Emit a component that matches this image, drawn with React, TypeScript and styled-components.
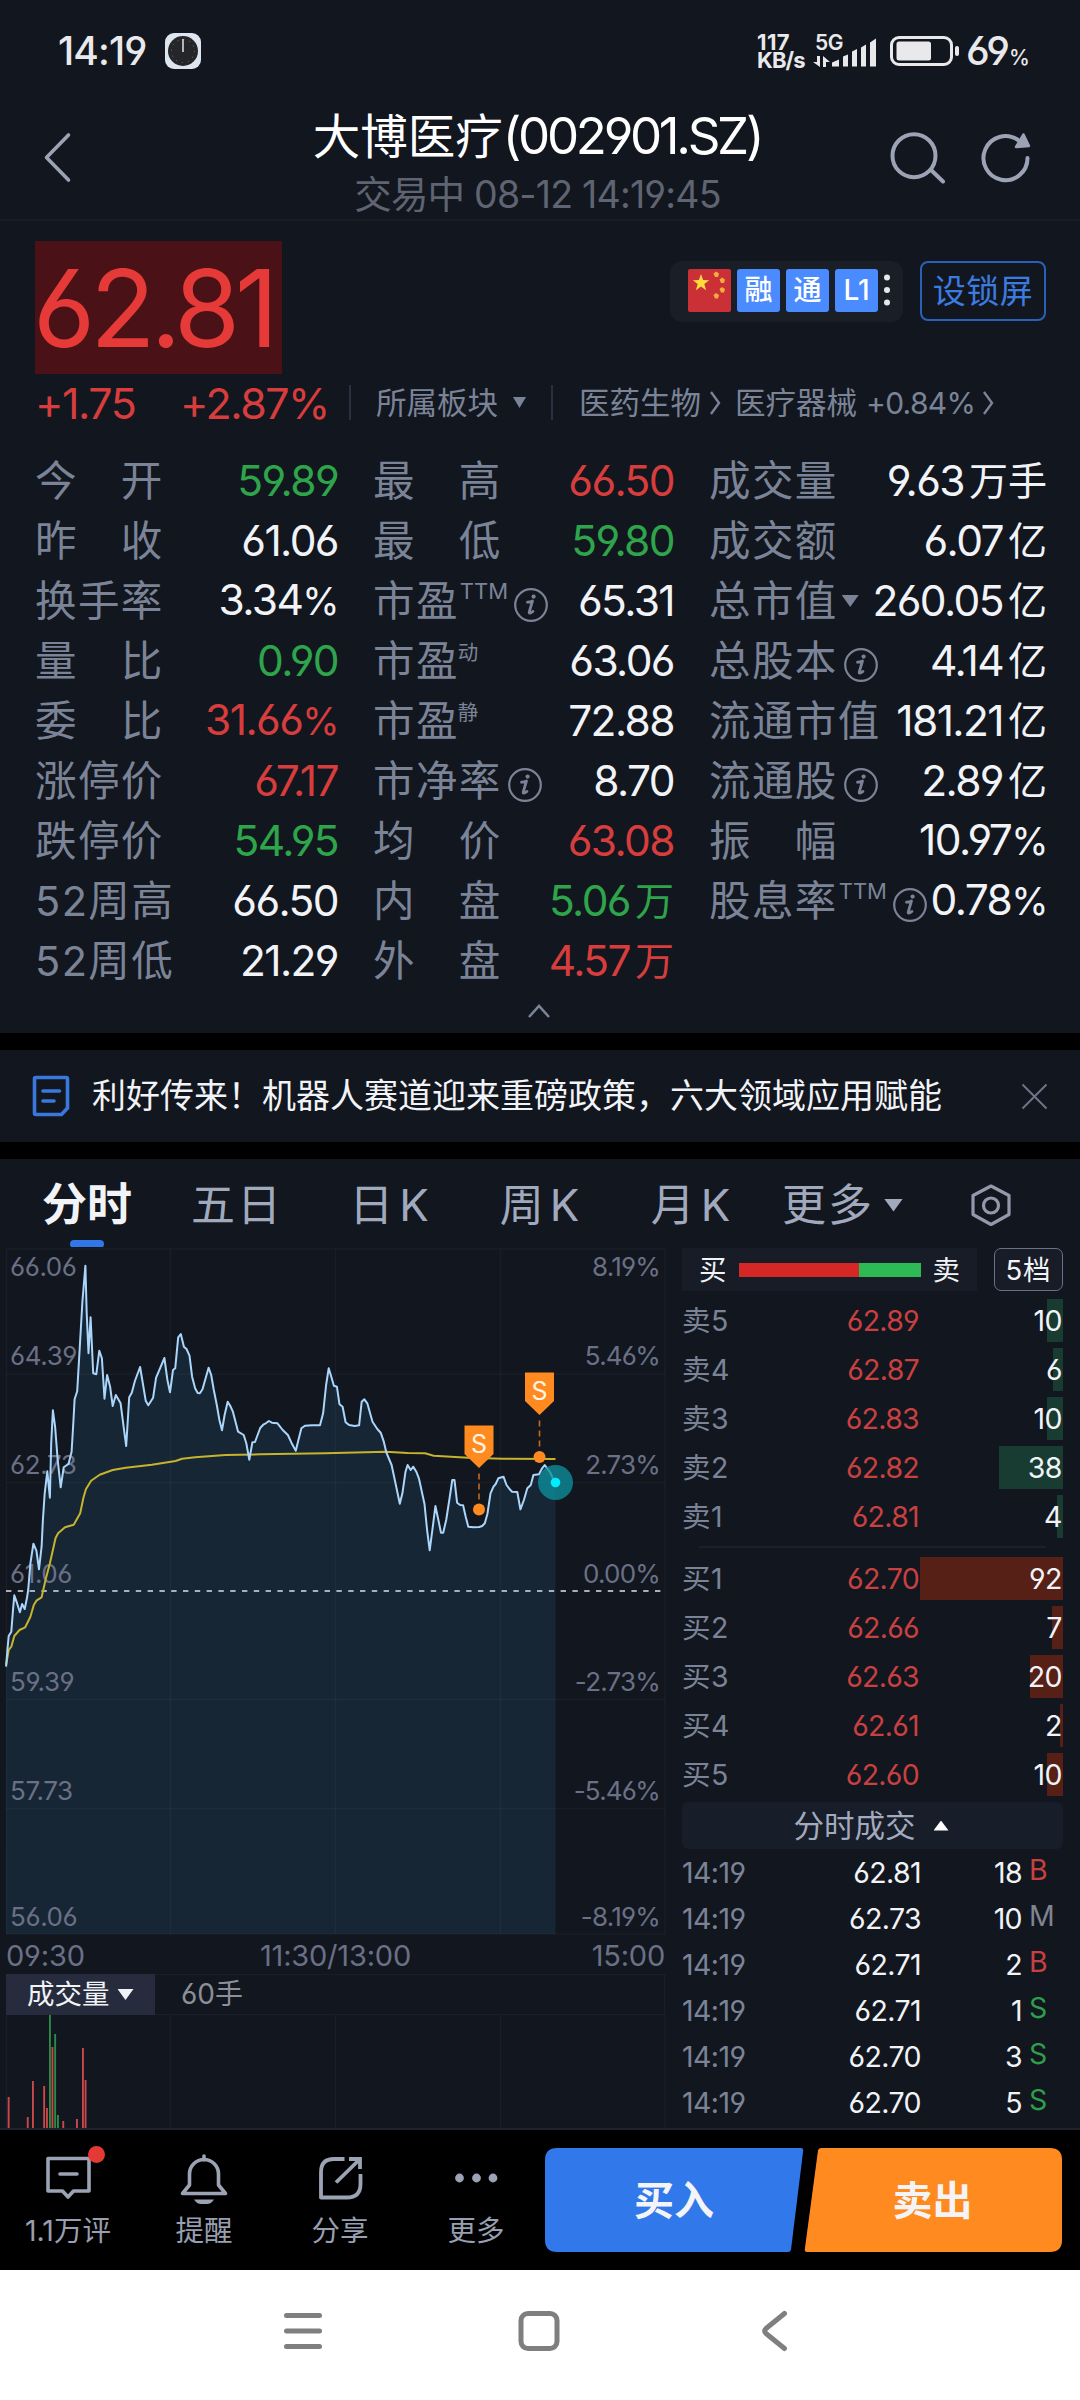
import React from "react";
import styled, { createGlobalStyle } from "styled-components";

const C = {
  bg: "#12161f",
  label: "#7b8497",
  text: "#f1f3f7",
  red: "#d63d3c",
  green: "#2ea44b",
  icon: "#9ba3b4",
  blue: "#3177e8",
  axis: "#6a7085",
  grid: "#191e28",
};

type Tone = "up" | "down" | "flat";
const toneColor = { up: C.red, down: C.green, flat: C.text };

const GlobalStyle = createGlobalStyle`
  * { box-sizing: border-box; }
  body {
    margin: 0;
    background: #000;
    font-family: Inter, "Noto Sans CJK SC", sans-serif;
    font-feature-settings: "cv03", "cv04";
  }
  svg { display: block; flex: none; }
`;

const Screen = styled.div`
  width: 1080px;
  height: 2400px;
  overflow: hidden;
  display: flex;
  flex-direction: column;
  background: #000;
  color: ${C.text};
`;

/* ---------- status bar ---------- */
const StatusBar = styled.div`
  height: 100px;
  flex: none;
  display: flex;
  align-items: center;
  padding: 1px 50px 0 58px;
  background: ${C.bg};
  color: #e9e9eb;
`;
const Clock = styled.span`
  width: 107px;
  font-size: 39px;
  line-height: 40px;
  font-weight: 500;
  letter-spacing: -0.9px;
`;
const StatusRight = styled.div`
  margin-left: auto;
  display: flex;
  align-items: center;
`;
const Speed = styled.div`
  width: 56px;
  display: flex;
  flex-direction: column;
  font-size: 22px;
  line-height: 18px;
  font-weight: 700;
  letter-spacing: -0.9px;
  white-space: nowrap;
  span:first-child { letter-spacing: 0.4px; }
`;
const Percent = styled.div`
  width: 64px;
  margin-left: 7px;
  height: 40px;
  display: flex;
  align-items: baseline;
  font-size: 40px;
  line-height: 40px;
  font-weight: 500;
  letter-spacing: -2px;
  small { font-size: 21px; line-height: 24px; letter-spacing: 0; font-weight: 500; margin-left: 1px; }
`;

/* ---------- header ---------- */
const Header = styled.header`
  height: 121px;
  flex: none;
  display: grid;
  grid-template-columns: 260px 1fr 260px;
  padding: 8px 48px 0 40px;
  background: ${C.bg};
  border-bottom: 2px solid #171c25;
`;
const HeaderSide = styled.div<{ $end?: boolean }>`
  display: flex;
  gap: 34px;
  padding-top: 20px;
  justify-content: ${(p) => (p.$end ? "flex-end" : "flex-start")};
`;
const Titles = styled.div`
  display: flex;
  flex-direction: column;
  align-items: center;
  white-space: nowrap;
`;
const Title = styled.h1`
  margin: 0;
  padding-left: 2px;
  font-size: 47.5px;
  line-height: 55px;
  font-weight: 400;
  color: #fff;
  span { font-size: 51px; letter-spacing: -3.3px; }
`;
const Subtitle = styled.div`
  font-size: 37.5px;
  line-height: 44px;
  margin-top: 9px;
  padding-left: 3px;
  color: #5f6472;
  letter-spacing: -0.8px;
`;

/* ---------- quote panel ---------- */
const Quote = styled.section`
  height: 812px;
  flex: none;
  display: flex;
  flex-direction: column;
  padding: 20px 34px 0 35px;
  background: ${C.bg};
`;
const PriceRow = styled.div`
  display: flex;
  height: 133px;
`;
const Price = styled.div`
  width: 247px;
  height: 133px;
  text-indent: -2px;
  font-size: 107px;
  line-height: 135px;
  letter-spacing: -5px;
  white-space: nowrap;
  color: #e53a38;
  background: #4a1217;
`;
const PriceActions = styled.div`
  margin: 20px 0 0 auto;
  display: flex;
  align-items: flex-start;
  gap: 17px;
`;
const Badges = styled.div`
  width: 233px;
  height: 61px;
  padding: 0 13px 3px 18px;
  display: flex;
  align-items: center;
  gap: 6px;
  border-radius: 12px;
  background: #1a1e27;
`;
const Badge = styled.span`
  width: 43px;
  height: 43px;
  border-radius: 3px;
  background: #4a8bff;
  color: #fff;
  font-size: 28px;
  line-height: 42px;
  font-weight: 500;
  text-align: center;
`;
const LockButton = styled.button`
  width: 126px;
  height: 60px;
  padding: 0;
  border: 2px solid #2a61b8;
  border-radius: 8px;
  background: none;
  font: inherit;
  font-size: 33px;
  line-height: 54px;
  letter-spacing: 0.5px;
  color: #3c7ce0;
`;
const SubRow = styled.div`
  height: 57px;
  display: flex;
  align-items: center;
  font-size: 30.5px;
  line-height: 40px;
  white-space: nowrap;
  color: ${C.label};
`;
const SectorChange = styled.span`
  margin-left: 9px;
  font-size: 30px;
  letter-spacing: -0.7px;
`;
const Change = styled.span<{ $w: number }>`
  width: ${(p) => p.$w}px;
  font-size: 43px;
  letter-spacing: -1.5px;
  color: ${C.red};
`;
const Bar = styled.i<{ $l: number; $r: number }>`
  width: 2px;
  height: 35px;
  margin: 0 ${(p) => p.$r}px 0 ${(p) => p.$l}px;
  background: #2a3040;
`;
const Caret = styled.i<{ $w: number; $h: number; $c?: string; $up?: boolean }>`
  width: ${(p) => p.$w}px;
  height: ${(p) => p.$h}px;
  flex: none;
  background: ${(p) => p.$c || "currentColor"};
  clip-path: ${(p) => (p.$up ? "polygon(50% 0, 100% 100%, 0 100%)" : "polygon(0 0, 100% 0, 50% 100%)")};
`;
const Stats = styled.div`
  margin-top: 20px;
  display: grid;
  grid-template-columns: 302px 300px 337px;
  column-gap: 36px;
`;
const StatCol = styled.div`
  display: flex;
  flex-direction: column;
`;
const Stat = styled.div`
  height: 60px;
  display: flex;
  justify-content: space-between;
  align-items: center;
  white-space: nowrap;
  line-height: 60px;
`;
const StatLabel = styled.div`
  display: flex;
  align-items: center;
  font-size: 41.5px;
  letter-spacing: 1.4px;
  color: ${C.label};
`;
const Sup = styled.sup<{ $cjk?: boolean }>`
  align-self: flex-start;
  margin-top: 7px;
  margin-left: ${(p) => (p.$cjk ? -1 : 1)}px;
  font-size: ${(p) => (p.$cjk ? 20.5 : 22)}px;
  line-height: ${(p) => (p.$cjk ? 30 : 26)}px;
  letter-spacing: 0;
`;
const StatValue = styled.div<{ $tone: Tone }>`
  display: flex;
  font-size: 42.5px;
  letter-spacing: -1.6px;
  margin-right: -1px;
  color: ${(p) => toneColor[p.$tone]};
  span { font-size: 39px; letter-spacing: 0; margin-left: 5px; }
  em { font-style: normal; font-size: 38px; line-height: 63px; }
`;
const Collapse = styled.div`
  display: flex;
  justify-content: center;
  padding: 12px 4px 0 0;
`;

/* ---------- news strip ---------- */
const News = styled.section`
  height: 92px;
  margin: 17px 0;
  flex: none;
  display: flex;
  align-items: center;
  padding: 0 32px;
  background: ${C.bg};
  font-size: 34px;
  line-height: 40px;
  white-space: nowrap;
  p { margin: 0 auto 0 22px; }
`;

/* ---------- chart tabs ---------- */
const Tabs = styled.nav`
  height: 88px;
  flex: none;
  display: grid;
  grid-template-columns: 174px 141px 150px 151px 151px 151px 1fr;
  padding-top: 16px;
  background: ${C.bg};
`;
const Tab = styled.div<{ $active?: boolean; $pad?: number }>`
  display: flex;
  flex-direction: column;
  align-items: center;
  padding-right: ${(p) => p.$pad || 0}px;
  white-space: nowrap;
  font-size: ${(p) => (p.$active ? 45 : 44)}px;
  line-height: 60px;
  letter-spacing: ${(p) => (p.$active ? 0 : 2)}px;
  font-weight: ${(p) => (p.$active ? 700 : 400)};
  color: ${(p) => (p.$active ? C.text : "#a1a9bd")};
`;
const TabLine = styled.span`
  display: flex;
  align-items: center;
  gap: 10px;
`;
const KLine = styled.span`
  display: flex;
  gap: 4px;
`;
const Pill = styled.i`
  width: 34px;
  height: 8px;
  margin-top: 5px;
  border-radius: 4px;
  background: ${C.blue};
`;

/* ---------- body ---------- */
const Body = styled.main`
  height: 883px;
  flex: none;
  display: grid;
  grid-template-columns: 682px 381px;
  background: ${C.bg};
  border-bottom: 2px solid #1f242c;
  overflow: hidden;
`;
const ChartSide = styled.div`
  display: flex;
  flex-direction: column;
`;
const TimeAxis = styled.div`
  width: 659px;
  height: 39px;
  margin-left: 6px;
  padding-top: 1px;
  display: grid;
  grid-template-columns: 1fr auto 1fr;
  font-size: 29px;
  line-height: 39px;
  letter-spacing: -0.2px;
  color: ${C.axis};
  :last-child { text-align: right; }
`;
const VolumeHead = styled.div`
  width: 659px;
  height: 41px;
  margin-left: 6px;
  display: flex;
  border: 1px solid ${C.grid};
  font-size: 28px;
  line-height: 39px;
  color: #8a8f98;
`;
const VolumePick = styled.div`
  width: 149px;
  height: 41px;
  margin: -1px 26px 0 -1px;
  display: flex;
  align-items: center;
  gap: 8px;
  padding-left: 21px;
  font-size: 27.5px;
  background: #262c3e;
  color: ${C.text};
`;

/* ---------- order book ---------- */
const BookSide = styled.div`
  display: flex;
  flex-direction: column;
  padding-top: 1px;
`;
const BookTop = styled.div`
  height: 43px;
  flex: none;
  margin-bottom: 8px;
  display: flex;
  justify-content: space-between;
`;
const Ratio = styled.div`
  width: 295px;
  height: 43px;
  padding: 0 17px;
  display: flex;
  align-items: center;
  justify-content: space-between;
  font-size: 27.5px;
  line-height: 40px;
  background: #171c27;
`;
const RatioBar = styled.div`
  width: 182px;
  height: 14px;
  background: linear-gradient(to right, #d62727 66%, #2dba55 66%);
`;
const Depth = styled.div`
  width: 69px;
  height: 43px;
  border: 1.5px solid #69718a;
  border-radius: 7px;
  background: #171c27;
  font-size: 27.5px;
  line-height: 43px;
  letter-spacing: 1px;
  text-align: center;
  white-space: nowrap;
`;
const Level = styled.div`
  height: 43px;
  flex: none;
  margin-bottom: 6px;
  display: grid;
  grid-template-columns: 100px 137px 144px;
  font-size: 28.5px;
  line-height: 43px;
`;
const LevelName = styled.span`
  letter-spacing: 0.6px;
  color: ${C.label};
`;
const LevelPrice = styled.span`
  text-align: right;
  letter-spacing: -0.7px;
  color: #c8403f;
`;
const LevelQty = styled.span<{ $fill: number; $buy?: boolean }>`
  padding-right: 1px;
  text-align: right;
  letter-spacing: -0.5px;
  color: ${C.text};
  background: linear-gradient(${(p) => (p.$buy ? "#572017, #572017" : "#183c31, #183c31")}) right / ${(p) => p.$fill}px 100% no-repeat;
`;
const BookSplit = styled.hr`
  width: 347px;
  height: 2px;
  flex: none;
  margin: 2px auto 9px 17px;
  border: 0;
  background: #1b212b;
`;
const TradesHead = styled.div`
  height: 47px;
  flex: none;
  margin: 0 0 11px;
  display: flex;
  align-items: center;
  justify-content: center;
  gap: 18px;
  border-radius: 6px;
  background: #171d29;
  font-size: 30.5px;
  line-height: 47px;
  padding-right: 3px;
  color: #a3aabe;
`;
const Trade = styled.div`
  height: 46px;
  flex: none;
  display: grid;
  grid-template-columns: 100px 139px 101px 41px;
  font-size: 28.5px;
  line-height: 26px;
  letter-spacing: -0.6px;
  text-align: right;
`;
const TradeTime = styled.span`
  text-align: left;
  color: ${C.label};
`;
const TradeSide = styled.span<{ $c: string }>`
  padding-left: 7px;
  margin-top: -3px;
  text-align: left;
  color: ${(p) => p.$c};
`;

/* ---------- bottom ---------- */
const BottomBar = styled.footer`
  height: 140px;
  flex: none;
  display: flex;
  background: #000;
`;
const Action = styled.div`
  width: 136px;
  padding-top: 22px;
  display: flex;
  flex-direction: column;
  align-items: center;
  gap: 9px;
  font-size: 28.5px;
  line-height: 36px;
  letter-spacing: 0;
  color: #989fb0;
`;
const TradeButtons = styled.div`
  position: relative;
  width: 517px;
  height: 104px;
  margin: 18px 0 0 1px;
  display: flex;
`;
const ButtonShapes = styled.svg`
  position: absolute;
  inset: 0;
`;
const TradeText = styled.b<{ $w: number; $shift: number }>`
  position: relative;
  width: ${(p) => p.$w}px;
  padding-left: ${(p) => p.$shift}px;
  font-size: 40px;
  line-height: 105px;
  text-align: center;
  color: #f4f4f6;
`;
const SystemNav = styled.div`
  height: 130px;
  flex: none;
  background: #fff;
`;

/* ---------- data ---------- */
type StatRow = { k: string; v: string; unit?: string; tone?: Tone; sup?: string; info?: boolean; caret?: boolean };
const columns: StatRow[][] = [
  [
    { k: "今　开", v: "59.89", tone: "down" },
    { k: "昨　收", v: "61.06" },
    { k: "换手率", v: "3.34%" },
    { k: "量　比", v: "0.90", tone: "down" },
    { k: "委　比", v: "31.66%", tone: "up" },
    { k: "涨停价", v: "67.17", tone: "up" },
    { k: "跌停价", v: "54.95", tone: "down" },
    { k: "52周高", v: "66.50" },
    { k: "52周低", v: "21.29" },
  ],
  [
    { k: "最　高", v: "66.50", tone: "up" },
    { k: "最　低", v: "59.80", tone: "down" },
    { k: "市盈", v: "65.31", sup: "TTM", info: true },
    { k: "市盈", v: "63.06", sup: "动" },
    { k: "市盈", v: "72.88", sup: "静" },
    { k: "市净率", v: "8.70", info: true },
    { k: "均　价", v: "63.08", tone: "up" },
    { k: "内　盘", v: "5.06", unit: "万", tone: "down" },
    { k: "外　盘", v: "4.57", unit: "万", tone: "up" },
  ],
  [
    { k: "成交量", v: "9.63", unit: "万手" },
    { k: "成交额", v: "6.07", unit: "亿" },
    { k: "总市值", v: "260.05", unit: "亿", caret: true },
    { k: "总股本", v: "4.14", unit: "亿", info: true },
    { k: "流通市值", v: "181.21", unit: "亿" },
    { k: "流通股", v: "2.89", unit: "亿", info: true },
    { k: "振　幅", v: "10.97%" },
    { k: "股息率", v: "0.78%", sup: "TTM", info: true },
  ],
];

const asks: [string, string, number, number][] = [
  ["卖5", "62.89", 10, 16],
  ["卖4", "62.87", 6, 10],
  ["卖3", "62.83", 10, 16],
  ["卖2", "62.82", 38, 64],
  ["卖1", "62.81", 4, 6],
];
const bids: [string, string, number, number][] = [
  ["买1", "62.70", 92, 143],
  ["买2", "62.66", 7, 11],
  ["买3", "62.63", 20, 33],
  ["买4", "62.61", 2, 3],
  ["买5", "62.60", 10, 16],
];
const trades: [string, number, string][] = [
  ["62.81", 18, "B"],
  ["62.73", 10, "M"],
  ["62.71", 2, "B"],
  ["62.71", 1, "S"],
  ["62.70", 3, "S"],
  ["62.70", 5, "S"],
];
const sideColor: Record<string, string> = { B: "#c8403f", M: "#7f848e", S: "#2f9e4c" };

/* Series are sampled on a 2.306 x 3 grid per pixel; the chart starts 51 units down. */
const priceSeries =
  "14,1310 17,1260 20,1218 26,1205 30,1140 33,1096 39,1118 46,1147 51,1122 57,1137 62,1105 65,1080 70,1000 77,941 84,962 90,1018 96,950 99,870 103,790 109,724 115,803 118,640 122,541 127,590 133,690 140,772 147,712 158,702 165,665 169,580 172,508 178,484 184,350 190,215 197,107 200,250 204,370 209,262 215,430 222,433 229,362 235,385 241,506 247,435 254,470 260,528 267,495 278,520 285,590 291,648 298,502 304,488 311,453 323,411 330,465 336,512 342,526 353,503 360,443 368,418 379,384 386,450 392,487 399,420 404,415 411,322 417,312 424,350 430,357 437,377 443,440 450,475 456,489 461,490 467,478 474,445 481,413 487,435 493,480 500,525 506,570 512,601 518,555 525,515 531,528 537,545 549,605 562,615 568,640 575,689 582,637 588,636 600,594 608,583 613,580 620,573 627,578 640,580 652,600 664,615 672,638 682,662 688,630 695,595 703,587 720,586 738,586 745,550 752,465 758,415 764,440 770,467 777,470 783,523 790,530 797,577 805,585 818,588 828,586 834,515 840,508 847,520 859,575 870,597 878,608 885,635 891,668 903,705 912,760 922,821 928,790 935,725 940,705 947,720 953,710 960,725 966,745 979,822 985,900 991,961 998,890 1004,828 1010,865 1017,908 1022,908 1029,870 1036,810 1043,750 1048,750 1054,818 1061,825 1068,826 1074,860 1080,890 1092,892 1105,891 1112,888 1118,880 1124,852 1131,790 1138,770 1143,762 1149,745 1161,740 1168,765 1175,777 1181,785 1193,786 1200,838 1208,810 1216,775 1224,765 1230,735 1243,733 1250,715 1256,705 1263,717 1270,730 1275,745 1281,757";
const averageSeries =
  "14,1305 20,1260 26,1250 33,1218 45,1200 58,1192 70,1160 78,1125 84,1112 96,1102 105,1050 115,1000 122,960 128,925 134,910 150,892 170,884 185,850 192,805 198,778 210,752 230,734 260,720 290,713 350,704 405,693 420,686 450,682 520,675 600,673 750,670 890,665 940,669 980,670 1000,677 1080,683 1160,686 1281,687";
const project = (series: string) =>
  series
    .split(" ")
    .map((p) => {
      const [x, y] = p.split(",").map(Number);
      return `${(x / 2.306).toFixed(1)},${((y - 51) / 3).toFixed(1)}`;
    })
    .join(" ");

const TOP = 1247;
const axisRows: [string, string, number][] = [
  ["66.06", "8.19%", 1276],
  ["64.39", "5.46%", 1365],
  ["62.73", "2.73%", 1474],
  ["61.06", "0.00%", 1583],
  ["59.39", "-2.73%", 1691],
  ["57.73", "-5.46%", 1800],
  ["56.06", "-8.19%", 1926],
];
const gridX = [6.5, 170.5, 335.5, 500.5, 665];
const volumes: [number, number, boolean][] = [
  [8.7, 32, true],
  [27.8, 12, true],
  [33, 48, true],
  [44.2, 43, true],
  [47, 21, true],
  [50, 115, false],
  [52.5, 82, true],
  [55.2, 95, false],
  [58, 14, false],
  [63.3, 8, true],
  [77, 10, true],
  [83, 81, true],
  [85.6, 49, true],
];

/* ---------- drawings ---------- */
const InfoIcon = () => (
  <svg width="34" height="34" viewBox="0 0 34 34" fill="none" stroke={C.label} style={{ marginLeft: 6, marginTop: 7 }}>
    <circle cx="17" cy="17" r="15.8" strokeWidth="2.200" />
    <path d="M13.500 14.200q3-.4 5-1.200l-3.300 11q-.6 2.600 3.800-.6" strokeWidth="2.700" strokeLinecap="round" strokeLinejoin="round" />
    <circle cx="19.600" cy="8.600" r="2.100" fill={C.label} stroke="none" />
  </svg>
);

const Chevron = ({ ml, mr = 0 }: { ml: number; mr?: number }) => (
  <svg width="12" height="24" viewBox="0 0 12 24" fill="none" stroke={C.label} strokeWidth="2.400" style={{ marginLeft: ml, marginRight: mr }}>
    <path d="M2 1l8 11-8 11" />
  </svg>
);

const Flag = () => (
  <svg width="43" height="43" viewBox="0 0 43 43">
    <rect width="43" height="43" rx="2" fill="#cc3037" />
    <path d="M13 5l2.100 6 6.100.2-4.900 3.900 1.800 6.100-5.100-3.600-5.100 3.600 1.800-6.100-4.900-3.900 6.100-.2z" fill="#fcdc3c" />
    <g fill="#f2ae3a">
      <path d="M28 2.500l3 2-1 3.500h-3l-1.500-3.500z" />
      <path d="M34 8.500l3 2-1 3.500h-3l-1.500-3.500z" />
      <path d="M34 18l3 2-1 3.500h-3l-1.500-3.500z" />
      <path d="M28 24l3 2-1 3.500h-3l-1.500-3.500z" />
    </g>
  </svg>
);

const SellMark = ({ x, y, dot }: { x: number; y: number; dot: number }) => (
  <g>
    <path d={`M${x - 14.5} ${y}h29v28.500l-14.500 14-14.500-14z`} fill="#ff8a20" />
    <text x={x} y={y + 27.5} fontSize="25" textAnchor="middle" fill="#fff3e4">S</text>
    <path d={`M${x} ${y + 48}V${dot - 8}`} stroke="#c26a20" strokeWidth="1.600" strokeDasharray="6 4" />
    <circle cx={x} cy={dot} r="6" fill="#ff8a20" />
  </g>
);

function PriceChart() {
  const line = project(priceSeries);
  return (
    <svg width="682" height="688" viewBox="0 0 682 688" fill="none">
      <polygon points={`${line} 555.5,687 6,687`} fill="#172635" />
      <g stroke="#7f90aa" strokeOpacity=".065" strokeWidth="1.500">
        {gridX.map((x) => <path key={x} d={`M${x} 2V687`} />)}
        {[2, 127, 235.5, 452.5, 561.5, 687].map((y) => <path key={y} d={`M6 ${y}H665`} />)}
      </g>
      <path d="M6 344H661" stroke="#a9afbd" strokeWidth="2" strokeDasharray="5.400 6.400" />
      <g fontSize="26" fill={C.axis}>
        {axisRows.map(([l, r, y]) => (
          <React.Fragment key={l}>
            <text x="10" y={y - TOP} letterSpacing="-0.4">{l}</text>
            <text x="660" y={y - TOP} letterSpacing="-0.8" textAnchor="end">{r}</text>
          </React.Fragment>
        ))}
      </g>
      <polyline points={project(averageSeries)} stroke="#c6b32e" strokeWidth="2" strokeLinejoin="round" />
      <polyline points={line} stroke="#abd6fb" strokeWidth="2" strokeLinejoin="round" />
      <SellMark x={479} y={178.5} dot={262.5} />
      <SellMark x={539.5} y={125.5} dot={210} />
      <circle cx="555.5" cy="235.500" r="17.500" fill="#0c8f9c" fillOpacity=".78" />
      <circle cx="555.5" cy="235.500" r="4.800" fill="#00ecff" />
    </svg>
  );
}

function VolumeChart() {
  return (
    <svg width="682" height="114" viewBox="0 0 682 114">
      {gridX.map((x) => <path key={x} d={`M${x} 0V114`} stroke={C.grid} strokeWidth="1.500" />)}
      {volumes.map(([x, h, up]) => (
        <rect key={x} x={x - 1} y={114 - h} width="1.900" height={h} fill={up ? "#c9484a" : "#2b8a44"} />
      ))}
    </svg>
  );
}

export default function App() {
  return (
    <Screen>
      <GlobalStyle />
      <StatusBar>
        <Clock>14:19</Clock>
        <svg width="36" height="36" viewBox="0 0 36 36">
          <rect width="36" height="36" rx="9" fill="#dde5ee" />
          <circle cx="18" cy="18" r="15" fill="#25262a" />
          <circle cx="18" cy="18" r="11.500" fill="none" stroke="#77797e" strokeWidth="1" strokeDasharray="1 5.020" />
          <path d="M18 6v13" stroke="#d9dadd" strokeWidth="1.600" />
        </svg>
        <StatusRight>
          <Speed><span>117</span><span>KB/s</span></Speed>
          <svg width="64" height="44" viewBox="812 27 64 44" fill="#e9e9eb">
            <text x="814" y="48" fontSize="21" fontWeight="600" letterSpacing="-.4">5G</text>
            <path d="M819 54v11l-7-5h4v-6zM822 65v-11l7 6h-4v5z" />
            <path d="M831 64.500v-4l7-3v7zM842 64.500v-10l5-2v12zM851 64.500v-15l5-2.500v17.500zM860 64.500v-19l5-3v22zM869 64.500v-24l6-4v28z" />
          </svg>
          <svg width="70" height="32" viewBox="0 0 70 32" style={{ marginLeft: 12 }}>
            <rect x="2.500" y="2.500" width="60" height="27" rx="7.500" fill="none" stroke="#e9e9eb" strokeWidth="3" />
            <rect x="7.500" y="6.500" width="34.500" height="19" rx="2.500" fill="#e9e9eb" />
            <rect x="66" y="11" width="4" height="10" rx="2" fill="#e9e9eb" />
          </svg>
          <Percent>69<small>%</small></Percent>
        </StatusRight>
      </StatusBar>

      <Header>
        <HeaderSide>
          <svg width="34" height="58" viewBox="0 0 34 58" fill="none" stroke={C.icon} strokeWidth="3.600" strokeLinecap="round" strokeLinejoin="round">
            <path d="M28.500 7L6.500 29.500l22 22.500" />
          </svg>
        </HeaderSide>
        <Titles>
          <Title>大博医疗<span>(002901.SZ)</span></Title>
          <Subtitle>交易中 08-12 14:19:45</Subtitle>
        </Titles>
        <HeaderSide $end>
          <svg width="56" height="56" viewBox="890 128 56 56" fill="none" stroke={C.icon} strokeWidth="4" strokeLinecap="round">
            <circle cx="914" cy="155.700" r="21.500" />
            <path d="M931 170l12 11.500" />
          </svg>
          <svg width="52" height="56" viewBox="980 128 52 56" fill="none" stroke={C.icon} strokeWidth="4" strokeLinecap="round">
            <path d="M1027.500 158A22 22 0 1 1 1018 140" />
            <path d="M1023.500 134.500l-7.500 12.500 13-1z" fill={C.icon} strokeWidth="2.500" strokeLinejoin="round" />
          </svg>
        </HeaderSide>
      </Header>

      <Quote>
        <PriceRow>
          <Price>62.81</Price>
          <PriceActions>
            <Badges>
              <Flag />
              <Badge>融</Badge>
              <Badge>通</Badge>
              <Badge>L1</Badge>
              <svg width="6" height="32" viewBox="0 0 6 32" fill="#e6e8ec">
                <circle cx="3" cy="3.500" r="3" /><circle cx="3" cy="16" r="3" /><circle cx="3" cy="28.500" r="3" />
              </svg>
            </Badges>
            <LockButton>设锁屏</LockButton>
          </PriceActions>
        </PriceRow>
        <SubRow>
          <Change $w={145}>+1.75</Change>
          <Change $w={150}>+2.87%</Change>
          <Bar $l={19} $r={25} />
          所属板块
          <Caret $w={13} $h={11} style={{ marginLeft: 15 }} />
          <Bar $l={25} $r={26} />
          医药生物
          <Chevron ml={8} mr={14} />
          医疗器械
          <SectorChange>+0.84%</SectorChange>
          <Chevron ml={7} />
        </SubRow>
        <Stats>
          {columns.map((col, i) => (
            <StatCol key={i}>
              {col.map((s, j) => (
                <Stat key={j}>
                  <StatLabel>
                    {s.k}
                    {s.sup && <Sup $cjk={s.sup !== "TTM"}>{s.sup}</Sup>}
                    {s.info && <InfoIcon />}
                    {s.caret && <Caret $w={17} $h={12} style={{ marginLeft: 4 }} />}
                  </StatLabel>
                  <StatValue $tone={s.tone || "flat"}>
                    {s.v.replace("%", "")}
                    {s.v.endsWith("%") && <em>%</em>}
                    {s.unit && <span>{s.unit}</span>}
                  </StatValue>
                </Stat>
              ))}
            </StatCol>
          ))}
        </Stats>
        <Collapse>
          <svg width="24" height="16" viewBox="0 0 24 16" fill="none" stroke={C.label} strokeWidth="2.600">
            <path d="M2 14L12 3l10 11" />
          </svg>
        </Collapse>
      </Quote>

      <News>
        <svg width="38" height="42" viewBox="0 0 38 42" fill="none" stroke="#3a78de" strokeWidth="3.600">
          <path d="M4 2.500h30q1.500 0 1.500 1.500v29l-6 6.500H4q-1.500 0-1.500-1.500V4q0-1.500 1.500-1.500z" />
          <path d="M11 16h16.500M11 26h11" strokeLinecap="round" />
        </svg>
        <p>利好传来！机器人赛道迎来重磅政策，六大领域应用赋能</p>
        <svg width="27" height="27" viewBox="0 0 27 27" stroke="#6c7486" strokeWidth="2">
          <path d="M1.500 1.500l24 24M25.500 1.500l-24 24" />
        </svg>
      </News>

      <Tabs>
        <Tab $active>分时<Pill /></Tab>
        <Tab $pad={15}>五日</Tab>
        <Tab><KLine><span>日</span><span>K</span></KLine></Tab>
        <Tab><KLine><span>周</span><span>K</span></KLine></Tab>
        <Tab><KLine><span>月</span><span>K</span></KLine></Tab>
        <Tab><TabLine>更多<Caret $w={19} $h={13} /></TabLine></Tab>
        <Tab $pad={16}>
          <svg width="42" height="60" viewBox="970 1175 42 60" fill="none" stroke="#9299ab" strokeWidth="3.200" strokeLinejoin="round">
            <path d="M991 1186l18 9.500v19l-18 10-18-10v-19z" />
            <circle cx="991" cy="1205.500" r="7.500" />
          </svg>
        </Tab>
      </Tabs>

      <Body>
        <ChartSide>
          <PriceChart />
          <TimeAxis>
            <span>09:30</span>
            <span>11:30/13:00</span>
            <span>15:00</span>
          </TimeAxis>
          <VolumeHead>
            <VolumePick>成交量<Caret $w={16} $h={11} /></VolumePick>
            60手
          </VolumeHead>
          <VolumeChart />
        </ChartSide>
        <BookSide>
          <BookTop>
            <Ratio>买<RatioBar />卖</Ratio>
            <Depth>5档</Depth>
          </BookTop>
          {asks.map(([n, p, q, w]) => (
            <Level key={n}>
              <LevelName>{n}</LevelName>
              <LevelPrice>{p}</LevelPrice>
              <LevelQty $fill={w}>{q}</LevelQty>
            </Level>
          ))}
          <BookSplit />
          {bids.map(([n, p, q, w]) => (
            <Level key={n}>
              <LevelName>{n}</LevelName>
              <LevelPrice>{p}</LevelPrice>
              <LevelQty $fill={w} $buy>{q}</LevelQty>
            </Level>
          ))}
          <TradesHead>
            分时成交
            <Caret $w={15} $h={10} $c="#fff" $up />
          </TradesHead>
          {trades.map(([p, q, s], i) => (
            <Trade key={i}>
              <TradeTime>14:19</TradeTime>
              <span>{p}</span>
              <span>{q}</span>
              <TradeSide $c={sideColor[s]}>{s}</TradeSide>
            </Trade>
          ))}
        </BookSide>
      </Body>

      <BottomBar>
        <Action>
          <svg width="72" height="52" viewBox="32 2152 72 52" fill="none" stroke={C.icon} strokeWidth="3.600" strokeLinejoin="round" overflow="visible">
            <path d="M48 2158.500h41v32.500H73.500l-5.500 6-5.500-6H48z" />
            <path d="M60 2174h17" strokeLinecap="round" />
            <circle cx="96.500" cy="2154.500" r="8.500" fill="#e53935" stroke="none" />
          </svg>
          1.1万评
        </Action>
        <Action>
          <svg width="52" height="52" viewBox="178 2152 52 52" fill="none" stroke={C.icon} strokeWidth="3.600" strokeLinejoin="round">
            <path d="M204 2156v4M189.500 2174a14.500 14.500 0 0 1 29 0v11l7 8.500h-43l7-8.500z" strokeLinecap="round" />
            <path d="M194 2199.500h20q-3 4.500-7 4.500h-6q-4 0-7-4.500z" fill={C.icon} stroke="none" />
          </svg>
          提醒
        </Action>
        <Action>
          <svg width="52" height="52" viewBox="314 2152 52 52" fill="none" stroke={C.icon} strokeWidth="3.800">
            <path d="M344.500 2159H334q-13 0-13 13v25.500h26q13.500 0 13.500-13.500v-10" strokeLinejoin="round" />
            <path d="M349 2159h11v10M360 2159l-24 23.500" />
          </svg>
          分享
        </Action>
        <Action>
          <svg width="52" height="52" viewBox="450 2152 52 52" fill={C.icon}>
            <circle cx="459.500" cy="2178" r="4.400" /><circle cx="476.500" cy="2178" r="4.400" /><circle cx="493" cy="2178" r="4.400" />
          </svg>
          更多
        </Action>
        <TradeButtons>
          <ButtonShapes width="517" height="104" viewBox="0 0 517 104">
            <path d="M12 0H256q2.500 0 2.200 2.500L246 101.500q-.4 2.500-3 2.500H12Q0 104 0 92V12Q0 0 12 0z" fill="#3178ea" />
            <path d="M276 0H505q12 0 12 12V92q0 12-12 12H262q-2.500 0-2.200-2.500L273 2.500Q273.400 0 276 0z" fill="#ff8a20" />
          </ButtonShapes>
          <TradeText $w={258} $shift={0}>买入</TradeText>
          <TradeText $w={259} $shift={0}>卖出</TradeText>
        </TradeButtons>
      </BottomBar>

      <SystemNav>
        <svg width="1080" height="130" viewBox="0 2270 1080 130" fill="none" stroke="#7f7f7f" strokeWidth="5" strokeLinecap="round" strokeLinejoin="round">
          <path d="M286.500 2315.500h33M286.500 2331h33M286.500 2346.500h33" />
          <rect x="521" y="2313.500" width="36" height="35" rx="7" />
          <path d="M784.500 2313.500l-18.500 15q-2.500 2.500 0 5l18.500 15" />
        </svg>
      </SystemNav>
    </Screen>
  );
}
